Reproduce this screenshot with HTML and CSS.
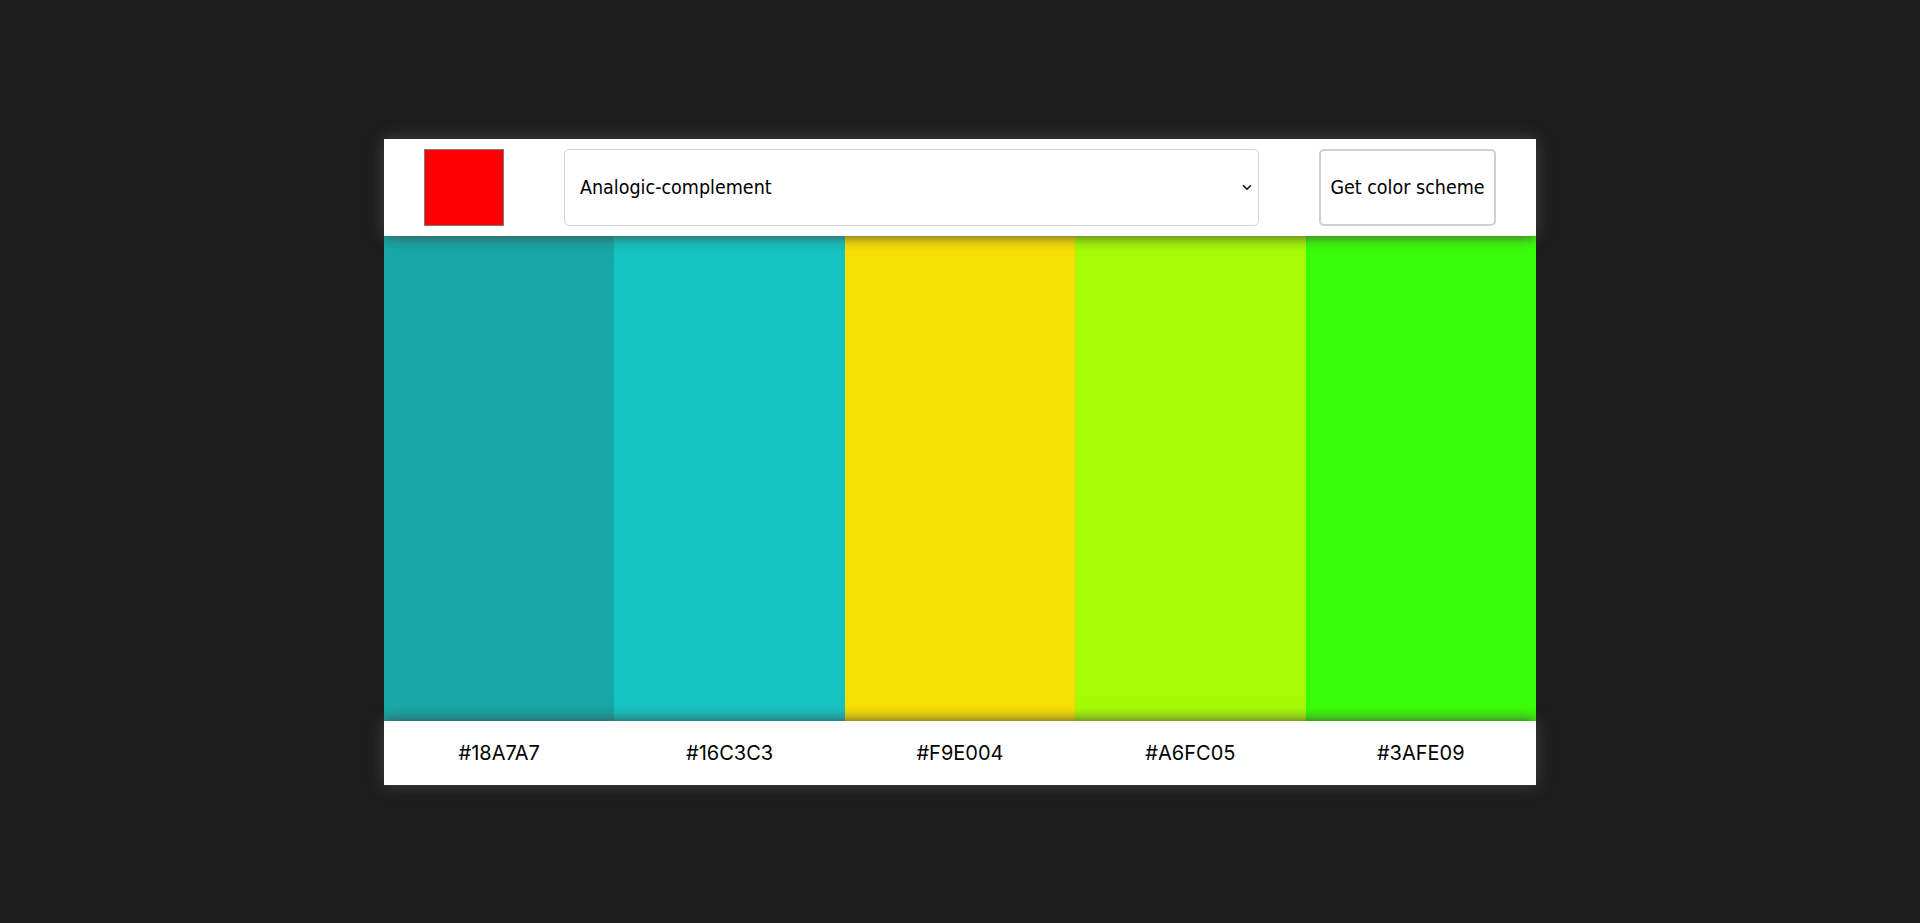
FILE: index.html
```html
<!DOCTYPE html>
<html lang="en">
<head>
<meta charset="utf-8">
<title>Color Scheme Generator</title>
<link rel="stylesheet" href="styles.css">
</head>
<body>
<main class="app">
  <header class="controls">
    <input class="seed" type="color" value="#ff0000" aria-label="Seed color">
    <div class="mode-wrap">
      <select class="mode" aria-label="Scheme mode">
        <option>Monochrome</option>
        <option>Monochrome-dark</option>
        <option>Monochrome-light</option>
        <option>Analogic</option>
        <option>Complement</option>
        <option selected>Analogic-complement</option>
        <option>Triad</option>
        <option>Quad</option>
      </select>
      <svg class="chevron" width="10" height="7" viewBox="0 0 10 7" aria-hidden="true">
        <path d="M1 1.2 L5 5.2 L9 1.2" fill="none" stroke="#111" stroke-width="1.6"/>
      </svg>
    </div>
    <button class="get-btn" type="button">Get color scheme</button>
  </header>
  <section class="swatches">
    <div class="swatch" style="background:#18A7A7"></div>
    <div class="swatch" style="background:#16C3C3"></div>
    <div class="swatch" style="background:#F9E004"></div>
    <div class="swatch" style="background:#A6FC05"></div>
    <div class="swatch" style="background:#3AFE09"></div>
  </section>
  <footer class="codes">
    <span class="code">#18A7A7</span>
    <span class="code">#16C3C3</span>
    <span class="code">#F9E004</span>
    <span class="code">#A6FC05</span>
    <span class="code">#3AFE09</span>
  </footer>
</main>
</body>
</html>
```

FILE: styles.css
```css
* {
  box-sizing: border-box;
}

html, body {
  margin: 0;
  height: 100%;
}

body {
  background: #1e1e1e;
  font-family: "Inter", "Liberation Sans", sans-serif;
  display: flex;
  align-items: center;
  justify-content: center;
}

.app {
  width: 60%;
  display: flex;
  flex-direction: column;
}

.controls {
  position: relative;
  z-index: 2;
  background: #ffffff;
  height: 97px;
  padding: 10px;
  display: flex;
  align-items: center;
  justify-content: space-around;
  box-shadow: 0 0 14px #434343;
}

.seed {
  -webkit-appearance: none;
  appearance: none;
  width: 80px;
  height: 77px;
  padding: 0;
  margin: 0;
  border: 1px solid #7c7c7c;
  background: #ff0000;
  cursor: pointer;
}

.seed::-webkit-color-swatch-wrapper {
  padding: 0;
}

.seed::-webkit-color-swatch {
  border: none;
}

.mode-wrap {
  position: relative;
  width: 695px;
  height: 77px;
}

.mode {
  -webkit-appearance: none;
  appearance: none;
  width: 100%;
  height: 100%;
  margin: 0;
  padding: 0 30px 0 15px;
  border: 1px solid #d3d3d3;
  border-radius: 5px;
  background: #ffffff;
  color: #000000;
  font-family: "DejaVu Sans Condensed", "Noto Sans", sans-serif;
  font-size: 19.5px;
}

.chevron {
  position: absolute;
  right: 7px;
  top: 35px;
  pointer-events: none;
}

.get-btn {
  width: 177px;
  height: 77px;
  margin: 0;
  padding: 0 8px;
  border: 2px solid #d0d0d0;
  border-radius: 5px;
  background: #ffffff;
  color: #000000;
  font-family: "DejaVu Sans Condensed", "Noto Sans", sans-serif;
  font-size: 19.5px;
  white-space: nowrap;
  cursor: pointer;
}

.swatches {
  display: flex;
  height: 485px;
}

.swatch {
  flex: 1;
}

.codes {
  position: relative;
  z-index: 2;
  background: #ffffff;
  height: 64px;
  display: grid;
  grid-template-columns: repeat(5, 1fr);
  align-items: center;
  box-shadow: 0 0 14px #434343;
}

.code {
  text-align: center;
  font-size: 20px;
  color: #000000;
}
```
